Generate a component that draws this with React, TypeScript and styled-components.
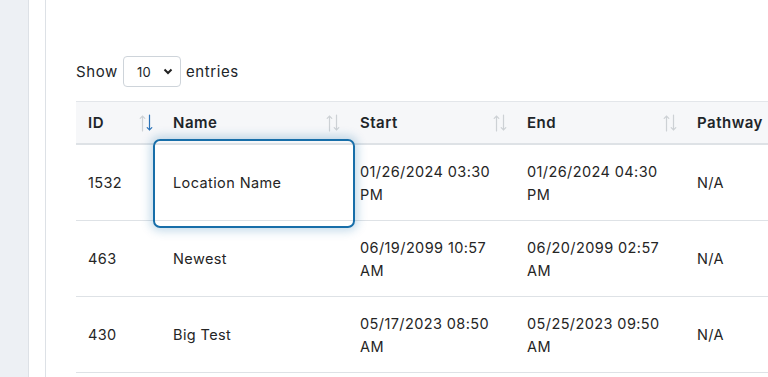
import React from 'react'
import styled, { createGlobalStyle } from 'styled-components'

const GlobalStyle = createGlobalStyle`
	html, body {
		margin: 0;
		padding: 0;
		background: #ffffff;
		overflow: hidden;
	}
	body {
		font-family: 'Inter', 'Open Sans', sans-serif;
		color: #212529;
	}
`

const Page = styled.div`
	display: flex;
	height: 377px;
	width: 768px;
	overflow: hidden;
`

const Sidebar = styled.div`
	flex: 0 0 28px;
	background: #edf0f4;
	border-right: 1px solid #dde1e6;
`

const Gutter = styled.div`
	flex: 0 0 16px;
	background: #ffffff;
	border-right: 1px solid #dde1e6;
`

const Main = styled.div`
	flex: 1;
	padding: 56px 0 0 30px;
	min-width: 0;
`

const Controls = styled.div`
	display: flex;
	align-items: center;
	gap: 5px;
	font-size: 15px;
	letter-spacing: 0.6px;
	height: 31px;
	margin-bottom: 14px;
`

const SelectBox = styled.div`
	position: relative;
	width: 58px;
	height: 31px;
	box-sizing: border-box;
	border: 1px solid #ced4da;
	border-radius: 4px;
	display: flex;
	align-items: center;
	padding-left: 13px;
	font-size: 13px;
	letter-spacing: 0.3px;
	svg {
		position: absolute;
		right: 7px;
		top: 11px;
	}
`

const Table = styled.table`
	border-collapse: collapse;
	table-layout: fixed;
	width: 760px;
	font-size: 14.5px;
	letter-spacing: 0.4px;
`

const HeadRow = styled.tr`
	background: #f6f7f9;
	border-top: 1px solid #e3e6ea;
	border-bottom: 2px solid #dee2e6;
`

const Th = styled.th<{ $w: number }>`
	position: relative;
	width: ${(p) => p.$w}px;
	text-align: left;
	font-weight: 600;
	font-size: 15px;
	letter-spacing: 0.5px;
	height: 42px;
	box-sizing: border-box;
	padding: 0 12px;
	line-height: 23px;
	white-space: nowrap;
`

const SortIcon = styled.span`
	position: absolute;
	right: 8px;
	top: 12px;
	display: flex;
`

const Row = styled.tr`
	border-bottom: 1px solid #dee2e6;
`

const Td = styled.td<{ $focus?: boolean }>`
	position: relative;
	padding: 15px 12px 14px;
	line-height: 23px;
	vertical-align: middle;
	color: #252525;
	${(p) =>
		p.$focus &&
		`
		&::after {
			content: '';
			position: absolute;
			left: -8px;
			right: -7px;
			top: -6px;
			bottom: -8px;
			border: 2px solid #176ea9;
			border-radius: 7px;
			box-shadow: 0 0 10px 3px rgba(23, 112, 173, 0.25);
			pointer-events: none;
			z-index: 2;
		}
	`}
`

const Sort = ({ active }: { active?: boolean }) => (
	<SortIcon>
		<svg width='14' height='18' viewBox='0 0 14 18'>
			<g fill='none' strokeWidth='1.2' strokeLinecap='round'>
				<path d='M3.5 17V2M1.2 4.3L3.5 2L5.8 4.3' stroke='#cdd1d5' />
				<path d='M10.5 1V16M8.2 13.7L10.5 16L12.8 13.7' stroke={active ? '#2c73b8' : '#cdd1d5'} />
			</g>
		</svg>
	</SortIcon>
)

const rows = [
	{ id: '1532', name: 'Location Name', start: '01/26/2024 03:30 PM', end: '01/26/2024 04:30 PM', pathway: 'N/A' },
	{ id: '463', name: 'Newest', start: '06/19/2099 10:57 AM', end: '06/20/2099 02:57 AM', pathway: 'N/A' },
	{ id: '430', name: 'Big Test', start: '05/17/2023 08:50 AM', end: '05/25/2023 09:50 AM', pathway: 'N/A' },
]

const App = () => {
	return (
		<>
			<GlobalStyle />
			<Page>
				<Sidebar />
				<Gutter />
				<Main>
					<Controls>
						<span>Show</span>
						<SelectBox>
							10
							<svg width='10' height='7' viewBox='0 0 10 7'>
								<path d='M1.5 1.5L5 5L8.5 1.5' fill='none' stroke='#222' strokeWidth='2' />
							</svg>
						</SelectBox>
						<span>entries</span>
					</Controls>
					<Table>
						<thead>
							<HeadRow>
								<Th $w={85}>
									ID
									<Sort active />
								</Th>
								<Th $w={187}>
									Name
									<Sort />
								</Th>
								<Th $w={167}>
									Start
									<Sort />
								</Th>
								<Th $w={170}>
									End
									<Sort />
								</Th>
								<Th $w={151}>Pathway</Th>
							</HeadRow>
						</thead>
						<tbody>
							{rows.map((r, i) => (
								<Row key={r.id}>
									<Td>{r.id}</Td>
									<Td $focus={i === 0}>{r.name}</Td>
									<Td>{r.start}</Td>
									<Td>{r.end}</Td>
									<Td>{r.pathway}</Td>
								</Row>
							))}
						</tbody>
					</Table>
				</Main>
			</Page>
		</>
	)
}

export default App
